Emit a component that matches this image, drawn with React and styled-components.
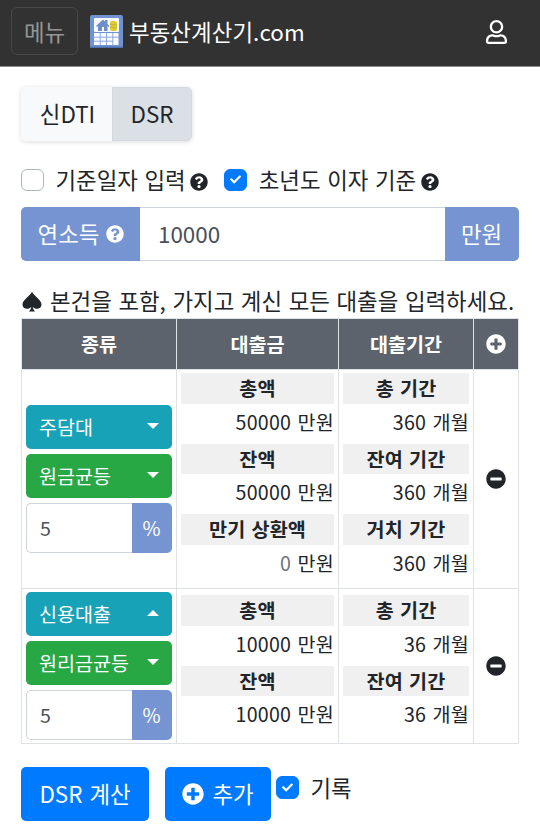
import React from 'react';
import styled, { createGlobalStyle } from 'styled-components';
import { FaCheck, FaMinusCircle, FaPlusCircle, FaQuestionCircle, FaRegUser } from 'react-icons/fa';

const GlobalStyle = createGlobalStyle`
    * {
        box-sizing: border-box;
    }
    body {
        margin: 0;
        background: #ffffff;
        color: #212529;
        font-family: "Noto Sans CJK KR", sans-serif;
        font-size: 22.4px;
        line-height: 1.5;
        word-spacing: 1.6px;
    }
`;

const Page = styled.div`
    height: 834px;
    overflow: hidden;
`;

const Navbar = styled.header`
    display: flex;
    align-items: center;
    height: 67px;
    padding: 0 33px 2px 11px;
    background: #323232;
    border-bottom: 1px solid #8f8c8c;
    color: #ffffff;
`;

const MenuButton = styled.button`
    width: 67px;
    height: 48px;
    margin: 0 12px 2px 0;
    padding: 2px 0 0;
    border: 1px solid #484848;
    border-radius: 6px;
    background: transparent;
    color: #969696;
    font: inherit;
`;

const Brand = styled.div`
    display: flex;
    align-items: center;
    gap: 6px;
    flex: 1;
    letter-spacing: 0.08px;
`;

const UserIcon = styled(FaRegUser)`
    width: 21px;
    height: 24px;
`;

const Main = styled.main`
    padding: 20px 21px 0;
`;

const ButtonGroup = styled.div`
    display: inline-flex;
    height: 54px;
    border-radius: 5px;
    box-shadow: 0 1px 5px rgba(0, 0, 0, 0.14);
`;

const Tab = styled.button`
    width: ${props => props.$width}px;
    padding: 0 0 0 ${props => props.$active ? 0 : 2}px;
    border: 1px solid ${props => props.$active ? '#d3d9df' : '#f8f9fa'};
    border-radius: ${props => props.$active ? '0 5px 5px 0' : '5px 0 0 5px'};
    background: ${props => props.$active ? '#dae0e5' : '#f8f9fa'};
    color: #212529;
    font: inherit;
`;

const Options = styled.div`
    display: flex;
    align-items: center;
    height: 34px;
    margin: 22px 0 10px;
`;

const Option = styled.label`
    display: flex;
    align-items: center;
    gap: 12px;
    margin-left: ${props => props.$left || 0}px;
    white-space: nowrap;
`;

const Box = styled.span`
    display: flex;
    align-items: center;
    justify-content: center;
    width: 22.5px;
    height: 22.5px;
    border: 1px solid ${props => props.$checked ? '#007bff' : '#adb5bd'};
    border-radius: 6px;
    background: ${props => props.$checked ? '#007bff' : '#ffffff'};
    color: #ffffff;
    font-size: 11px;
`;

const HelpIcon = styled(FaQuestionCircle)`
    flex: none;
    width: 18px;
    height: 18px;
    margin: 3px 0 0 4.5px;
`;

const InputGroup = styled.div`
    display: flex;
    height: ${props => props.$small ? 50 : 54}px;
    font-size: ${props => props.$small ? 19.6 : 22.4}px;
`;

const Addon = styled.span`
    display: flex;
    align-items: center;
    justify-content: center;
    gap: 7px;
    width: ${props => props.$width}px;
    border-radius: ${props => props.$first ? '5px 0 0 5px' : '0 5px 5px 0'};
    background: #7594d1;
    color: #ffffff;
    padding-right: ${props => props.$first ? 0 : 1}px;
    padding-left: ${props => props.$first ? 1 : 0}px;
`;

const Input = styled.input`
    flex: 1;
    min-width: 0;
    padding: 0 ${props => props.$small ? 13 : 18}px;
    border: 1px solid #ced4da;
    border-width: ${props => props.$small ? '1px 0 1px 1px' : '1px 0'};
    border-radius: ${props => props.$small ? '5px 0 0 5px' : 0};
    background: #ffffff;
    color: #495057;
    font: inherit;
`;

const Notice = styled.p`
    display: flex;
    align-items: center;
    gap: 8px;
    height: 34px;
    margin: 23px 0 0 1px;
    white-space: nowrap;
`;

const Table = styled.table`
    width: 498px;
    table-layout: fixed;
    border-collapse: collapse;
    font-size: 19.6px;
`;

const Head = styled.th`
    height: 51px;
    padding: 0;
    border: 1px solid #dee2e6;
    background: #5c636c;
    color: #ffffff;
    font-weight: 700;
`;

const Cell = styled.td`
    height: ${props => props.$height}px;
    padding: 0 4px;
    border: 1px solid #dee2e6;
    text-align: center;
    vertical-align: middle;
`;

const TopCell = styled(Cell)`
    padding-top: ${props => props.$top}px;
    vertical-align: top;
`;

const RoundIcon = styled.span`
    display: flex;
    justify-content: center;
    font-size: 20px;
`;

const Stack = styled.div`
    display: flex;
    flex-direction: column;
    gap: 5px;
`;

const Select = styled.button`
    display: flex;
    align-items: center;
    justify-content: space-between;
    height: 44px;
    padding: 0 13px;
    border: 0;
    border-radius: 5px;
    background: ${props => props.$color};
    color: #ffffff;
    font: inherit;
`;

const Caret = styled.span`
    border: 6px solid transparent;
    border-top: ${props => props.$up ? '0' : '6px solid #ffffff'};
    border-bottom: ${props => props.$up ? '6px solid #ffffff' : '0'};
    margin-bottom: 2px;
`;

const Label = styled.div`
    height: 30.6px;
    background: #f0f0f0;
    font-weight: 700;
    line-height: 30px;
    letter-spacing: 0.15px;
`;

const Value = styled.div`
    height: 40px;
    line-height: 36px;
    text-align: right;
    letter-spacing: 0.25px;
`;

const Placeholder = styled.span`
    color: #6c757d;
`;

const Actions = styled.div`
    display: flex;
    margin-top: 23px;
`;

const Button = styled.button`
    display: flex;
    align-items: center;
    justify-content: center;
    gap: 8px;
    width: ${props => props.$width}px;
    height: 54px;
    margin-right: ${props => props.$gap}px;
    padding: 0;
    border: 0;
    border-radius: 5px;
    background: #007bff;
    color: #ffffff;
    font: inherit;
    word-spacing: 2px;
`;

const Record = styled(Option)`
    height: 41px;
`;

const loans = [
    {
        kind: '주담대',
        open: false,
        method: '원금균등',
        height: 219,
        top: 3,
        amounts: [['총액', '50000'], ['잔액', '50000'], ['만기 상환액', null]],
        periods: [['총 기간', '360'], ['잔여 기간', '360'], ['거치 기간', '360']],
    },
    {
        kind: '신용대출',
        open: true,
        method: '원리금균등',
        height: 155,
        top: 6,
        amounts: [['총액', '10000'], ['잔액', '10000']],
        periods: [['총 기간', '36'], ['잔여 기간', '36']],
    },
];

const Logo = () => (
    <svg width="33" height="33" viewBox="0 0 33 33">
        <rect width="33" height="33" rx="2" fill="#7192d0" />
        <path d="M0 31.500h33V33H0z" fill="#4f72af" />
        <rect x="4" y="3" width="25" height="14" rx="1" fill="#f8fbff" />
        <path d="M6 11l7-6.500 2 2V5h2.500v4l2 2-1 1-1-1v5h-3.500v-4h-2v4H8v-5l-1 1z" fill="#6f8fcb" />
        <rect x="20" y="6" width="7" height="10" rx="2" fill="#dfcb35" />
        <path d="M20 9q3.500 2 7 0M20 12q3.500 2 7 0" stroke="#b8a93a" strokeWidth="0.7" fill="none" />
        <path d="M4 18h24.500v12H4z" fill="#f8fbff" />
        <path d="M4 22.200h25M4 26.200h19M10.200 18v12M16.500 18v12M22.800 18v12" stroke="#8fa9db" strokeWidth="1" />
    </svg>
);

const Spade = () => (
    <svg width="20" height="21" viewBox="0 0 20 21">
        <path d="M10 .5C8.500 5 .5 8.500 .5 13.500c0 5 6.500 5.500 8.700 2.200C9 18 8.300 19 6.800 20.500h6.400c-1.500-1.500-2.200-2.500-2.400-4.800 2.200 3.300 8.700 2.800 8.700-2.200C19.500 8.500 11.500 5 10 .5z" fill="#212529" />
    </svg>
);

const Checkbox = ({ checked }) => (
    <Box $checked={checked}>{checked && <FaCheck />}</Box>
);

const Figures = ({ items, unit }) => items.map(([label, value]) => (
    <React.Fragment key={label}>
        <Label>{label}</Label>
        <Value>{value || <Placeholder>0</Placeholder>} {unit}</Value>
    </React.Fragment>
));

const LoanRow = ({ loan }) => (
    <tr>
        <Cell $height={loan.height}>
            <Stack>
                <Select $color="#17a2b8">{loan.kind}<Caret $up={loan.open} /></Select>
                <Select $color="#28a745">{loan.method}<Caret /></Select>
                <InputGroup $small>
                    <Input $small defaultValue="5" />
                    <Addon $width={40}>%</Addon>
                </InputGroup>
            </Stack>
        </Cell>
        <TopCell $height={loan.height} $top={loan.top}><Figures items={loan.amounts} unit="만원" /></TopCell>
        <TopCell $height={loan.height} $top={loan.top}><Figures items={loan.periods} unit="개월" /></TopCell>
        <Cell $height={loan.height}><RoundIcon><FaMinusCircle /></RoundIcon></Cell>
    </tr>
);

export default function App() {
    return (
        <Page>
            <GlobalStyle />
            <Navbar>
                <MenuButton>메뉴</MenuButton>
                <Brand><Logo />부동산계산기.com</Brand>
                <UserIcon />
            </Navbar>
            <Main>
                <ButtonGroup>
                    <Tab $width={91}>신DTI</Tab>
                    <Tab $width={80} $active>DSR</Tab>
                </ButtonGroup>
                <Options>
                    <Option><Checkbox />기준일자 입력</Option>
                    <HelpIcon />
                    <Option $left={16}><Checkbox checked />초년도 이자 기준</Option>
                    <HelpIcon />
                </Options>
                <InputGroup>
                    <Addon $width={119} $first>연소득<FaQuestionCircle size={18} /></Addon>
                    <Input defaultValue="10000" />
                    <Addon $width={74}>만원</Addon>
                </InputGroup>
                <Notice><Spade />본건을 포함, 가지고 계신 모든 대출을 입력하세요.</Notice>
                <Table>
                    <colgroup>
                        <col width="155" />
                        <col width="162" />
                        <col width="135" />
                        <col width="45" />
                    </colgroup>
                    <thead>
                        <tr>
                            <Head>종류</Head>
                            <Head>대출금</Head>
                            <Head>대출기간</Head>
                            <Head><RoundIcon><FaPlusCircle /></RoundIcon></Head>
                        </tr>
                    </thead>
                    <tbody>
                        {loans.map(loan => <LoanRow key={loan.kind} loan={loan} />)}
                    </tbody>
                </Table>
                <Actions>
                    <Button $width={128} $gap={16}>DSR 계산</Button>
                    <Button $width={106} $gap={5}><FaPlusCircle size={22} />추가</Button>
                    <Record><Checkbox checked />기록</Record>
                </Actions>
            </Main>
        </Page>
    );
}
